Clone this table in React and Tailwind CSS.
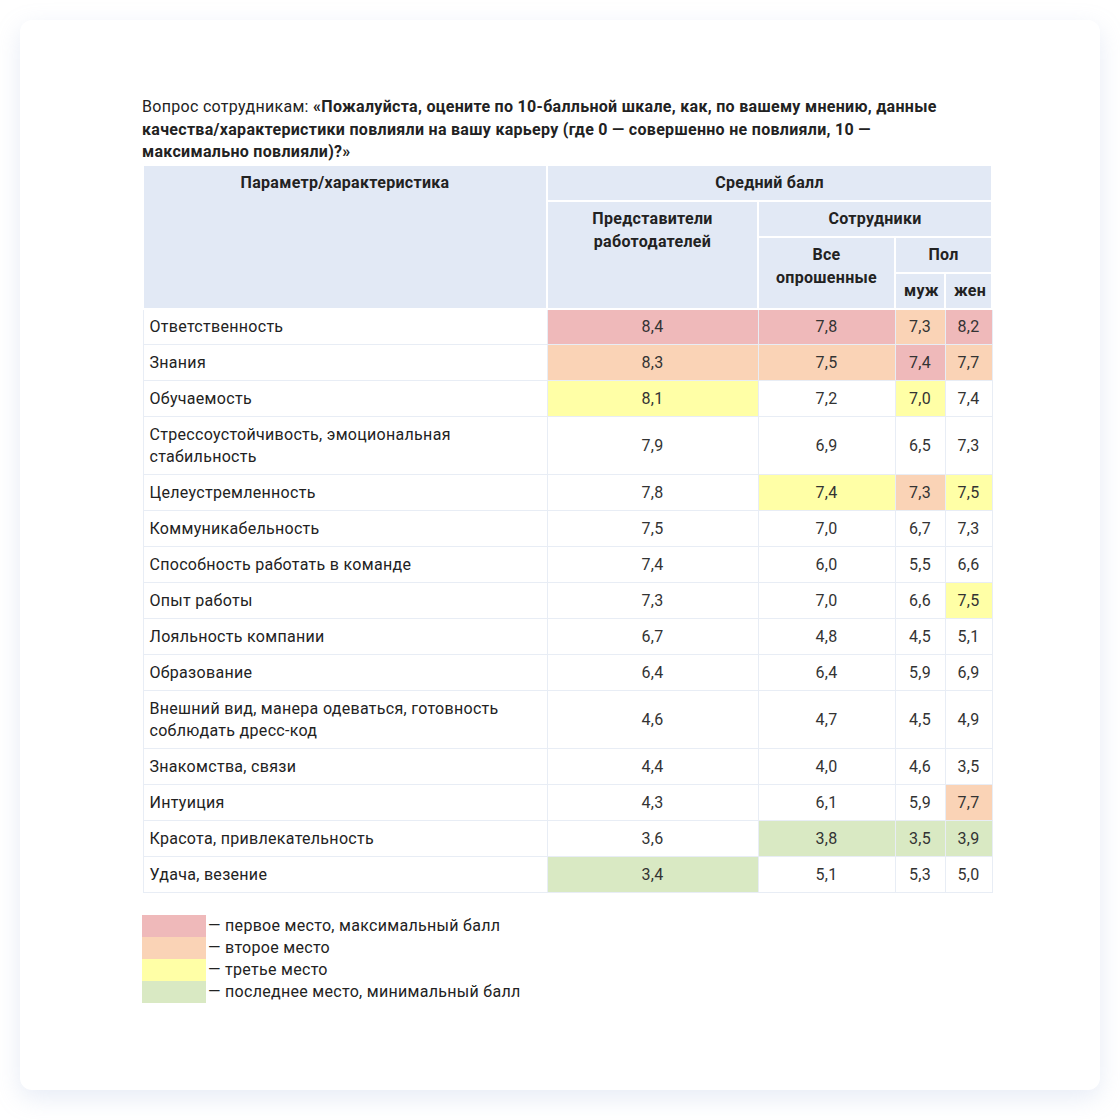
const PINK = 'bg-[#efb9ba]'
const PEACH = 'bg-[#fad3b6]'
const YELLOW = 'bg-[#ffffa6]'
const GREEN = 'bg-[#d9e9c3]'

const C = { p: PINK, o: PEACH, y: YELLOW, g: GREEN, '': 'bg-white' }

const rows = [
  { label: 'Ответственность', v: ['8,4', '7,8', '7,3', '8,2'], c: ['p', 'p', 'o', 'p'] },
  { label: 'Знания', v: ['8,3', '7,5', '7,4', '7,7'], c: ['o', 'o', 'p', 'o'] },
  { label: 'Обучаемость', v: ['8,1', '7,2', '7,0', '7,4'], c: ['y', '', 'y', ''] },
  { label: 'Стрессоустойчивость, эмоциональная стабильность', v: ['7,9', '6,9', '6,5', '7,3'], c: ['', '', '', ''], tall: true },
  { label: 'Целеустремленность', v: ['7,8', '7,4', '7,3', '7,5'], c: ['', 'y', 'o', 'y'] },
  { label: 'Коммуникабельность', v: ['7,5', '7,0', '6,7', '7,3'], c: ['', '', '', ''] },
  { label: 'Способность работать в команде', v: ['7,4', '6,0', '5,5', '6,6'], c: ['', '', '', ''] },
  { label: 'Опыт работы', v: ['7,3', '7,0', '6,6', '7,5'], c: ['', '', '', 'y'] },
  { label: 'Лояльность компании', v: ['6,7', '4,8', '4,5', '5,1'], c: ['', '', '', ''] },
  { label: 'Образование', v: ['6,4', '6,4', '5,9', '6,9'], c: ['', '', '', ''] },
  { label: 'Внешний вид, манера одеваться, готовность соблюдать дресс-код', v: ['4,6', '4,7', '4,5', '4,9'], c: ['', '', '', ''], tall: true },
  { label: 'Знакомства, связи', v: ['4,4', '4,0', '4,6', '3,5'], c: ['', '', '', ''] },
  { label: 'Интуиция', v: ['4,3', '6,1', '5,9', '7,7'], c: ['', '', '', 'o'] },
  { label: 'Красота, привлекательность', v: ['3,6', '3,8', '3,5', '3,9'], c: ['', 'g', 'g', 'g'] },
  { label: 'Удача, везение', v: ['3,4', '5,1', '5,3', '5,0'], c: ['g', '', '', ''] },
]

const legend = [
  { c: PINK, t: '— первое место, максимальный балл' },
  { c: PEACH, t: '— второе место' },
  { c: YELLOW, t: '— третье место' },
  { c: GREEN, t: '— последнее место, минимальный балл' },
]

function Th({ children, className = '', ...rest }) {
  return (
    <th {...rest} className={`bg-[#e2e9f5] border-2 border-white align-top text-center font-bold px-2 pt-[5px] leading-[23px] ${className}`}>
      {children}
    </th>
  )
}

export default function App() {
  return (
    <div className="min-h-screen bg-white p-5 font-['Roboto','Liberation_Sans',sans-serif] text-[#222] text-[16px] tracking-[0.3px]">
      <div className="h-[1070px] w-[1080px] rounded-xl bg-white shadow-[0_8px_24px_rgba(160,180,220,0.25)] pl-[122px] pt-[76px]">
        <p className="w-[830px] leading-[22.5px]">
          Вопрос сотрудникам: <b>«Пожалуйста, оцените по 10-балльной шкале, как, по вашему мнению, данные качества/характеристики повлияли на вашу карьеру (где 0 — совершенно не повлияли, 10 — максимально повлияли)?»</b>
        </p>
        <table className="w-[849px] table-fixed border-collapse">
          <colgroup>
            <col className="w-[404px]" />
            <col className="w-[211px]" />
            <col className="w-[137px]" />
            <col className="w-[50px]" />
            <col className="w-[47px]" />
          </colgroup>
          <thead>
            <tr className="h-[36px]">
              <Th rowSpan={4}>Параметр/характеристика</Th>
              <Th colSpan={4}>Средний балл</Th>
            </tr>
            <tr className="h-[36px]">
              <Th rowSpan={3}>Представители<br />работодателей</Th>
              <Th colSpan={3}>Сотрудники</Th>
            </tr>
            <tr className="h-[36px]">
              <Th rowSpan={2}>Все<br />опрошенные</Th>
              <Th colSpan={2}>Пол</Th>
            </tr>
            <tr className="h-[36px]">
              <Th className="px-0">муж</Th>
              <Th className="px-0">жен</Th>
            </tr>
          </thead>
          <tbody>
            {rows.map(r => (
              <tr key={r.label} className={r.tall ? 'h-[58px]' : 'h-[36px]'}>
                <td className="border border-[#e8edf5] pl-[6px] pr-2 leading-[22px]">
                  <div className={r.tall ? 'w-[365px]' : ''}>{r.label}</div>
                </td>
                {r.v.map((val, i) => (
                  <td key={i} className={`border border-[#e8edf5] text-center text-[#333] ${C[r.c[i]]}`}>{val}</td>
                ))}
              </tr>
            ))}
          </tbody>
        </table>
        <div className="mt-[22px] flex flex-col leading-[22px]">
          {legend.map(l => (
            <div key={l.t} className="flex items-center">
              <div className={`h-[22px] w-[64px] ${l.c}`} />
              <span className="ml-[2px]">{l.t}</span>
            </div>
          ))}
        </div>
      </div>
    </div>
  )
}
